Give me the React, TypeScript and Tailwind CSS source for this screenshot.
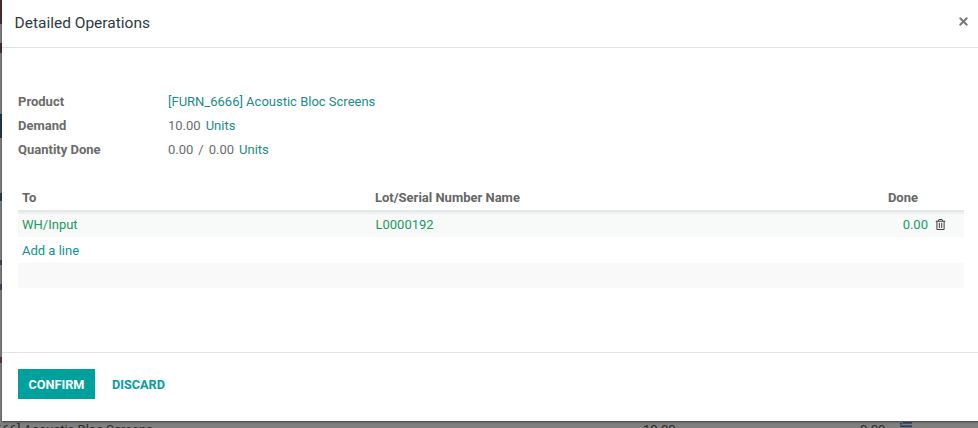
import { X } from 'lucide-react'
import { FaRegTrashAlt } from 'react-icons/fa'

const labelClass = 'w-[150px] font-bold text-[#6b6b6b]'
const linkClass = 'text-[#1d8a8a]'

function InfoRow({ label, children }: { label: string; children: React.ReactNode }) {
  return (
    <div className="flex h-6 items-center">
      <div className={labelClass}>{label}</div>
      <div className="flex items-center text-[#6b6b6b]">{children}</div>
    </div>
  )
}

// slivers of the page behind the dialog, seen at its left edge
function BackdropEdge() {
  return (
    <div className="flex h-[421px] w-[2px] shrink-0 flex-col">
      <div className="h-6 bg-[#4a3030]" />
      <div className="h-[19px]" />
      <div className="h-[10px] bg-[#4a3030]" />
      <div className="h-[61px]" />
      <div className="h-6 bg-[#1f3a4a]" />
      <div className="h-[55px]" />
      <div className="h-2 bg-[#2c3c48]" />
      <div className="h-[59px]" />
      <div className="h-[5px] bg-[#3c4a60]" />
      <div className="h-[19px]" />
      <div className="h-[6px] bg-[#3c4a60]" />
      <div className="h-[67px]" />
      <div className="h-[6px] bg-[#5a3c3c]" />
    </div>
  )
}

export default function App() {
  return (
    <div className="h-[428px] w-[978px] overflow-hidden bg-[#7f7f7f] font-['Roboto',sans-serif] text-[13px]">
      <div className="flex">
        <BackdropEdge />
        <div className="flex h-[421px] flex-1 flex-col bg-white shadow-[0_1px_2px_rgba(0,0,0,0.5)]">
          <header className="flex h-12 shrink-0 items-center justify-between border-b border-[#dee2e6] pl-[12.5px] pr-[10px]">
            <h4 className="text-[15.5px] text-[#2c3a42]">Detailed Operations</h4>
            <X className="-mt-[5px] size-[13px] text-[#777777]" strokeWidth={3.5} />
          </header>

          <main className="flex-1 px-4 pt-[42px]">
            <InfoRow label="Product">
              <span className={linkClass}>[FURN_6666] Acoustic Bloc Screens</span>
            </InfoRow>
            <InfoRow label="Demand">
              10.00<span className={`ml-[5px] ${linkClass}`}>Units</span>
            </InfoRow>
            <InfoRow label="Quantity Done">
              0.00<span className="mx-[5px]">/</span>0.00
              <span className={`ml-[5px] ${linkClass}`}>Units</span>
            </InfoRow>

            <div className="mt-[25px] w-[946px]">
              <div className="flex h-[25px] items-center border-b-2 border-[#e4e8e8] pb-[2px] pl-1 pr-[46px] font-bold text-[#666666]">
                <div className="w-[353px]">To</div>
                <div className="flex-1">Lot/Serial Number Name</div>
                <div>Done</div>
              </div>
              <div className="flex h-[25px] items-center border-t-[2px] border-[#eef1f2] bg-[#f8f9f9] pb-[2px] pl-1 pr-[18px] text-[#1a9a63]">
                <div className="w-[353.5px]">WH/Input</div>
                <div className="flex-1">L0000192</div>
                <div>0.00</div>
                <FaRegTrashAlt className="ml-[7px] size-[11px] text-[#444444]" />
              </div>
              <div className="flex h-[26px] items-center pl-1 pt-[2px] text-[#0f938c]">Add a line</div>
              <div className="h-[25px] bg-[#f9f9f9]" />
            </div>
          </main>

          <footer className="flex h-[69px] shrink-0 items-start gap-[6px] border-t border-[#dee2e6] px-4 pt-4">
            <button className="h-[30px] w-[77px] bg-[#00a09d] pt-px text-[12.7px] font-bold text-white">CONFIRM</button>
            <button className="h-[30px] px-[11px] pt-px text-[12.7px] font-bold text-[#00a09d]">DISCARD</button>
          </footer>
        </div>
      </div>
      <div className="flex h-[7px] items-start text-[#2a2a2a]">
        <span className="-ml-[5px] w-[648px] leading-[17px]">666] Acoustic Bloc Screens</span>
        <span className="w-[217px] leading-[17px]">10.00</span>
        <span className="w-[39px] leading-[17px]">0.00</span>
        <svg viewBox="0 0 14 7" className="mt-[1px] h-[6px] w-[14px]" fill="#2c3c5c">
          <rect x="0" y="1" width="2" height="2" />
          <rect x="3" y="0" width="11" height="2" />
          <rect x="0" y="4" width="14" height="2" />
        </svg>
      </div>
    </div>
  )
}
